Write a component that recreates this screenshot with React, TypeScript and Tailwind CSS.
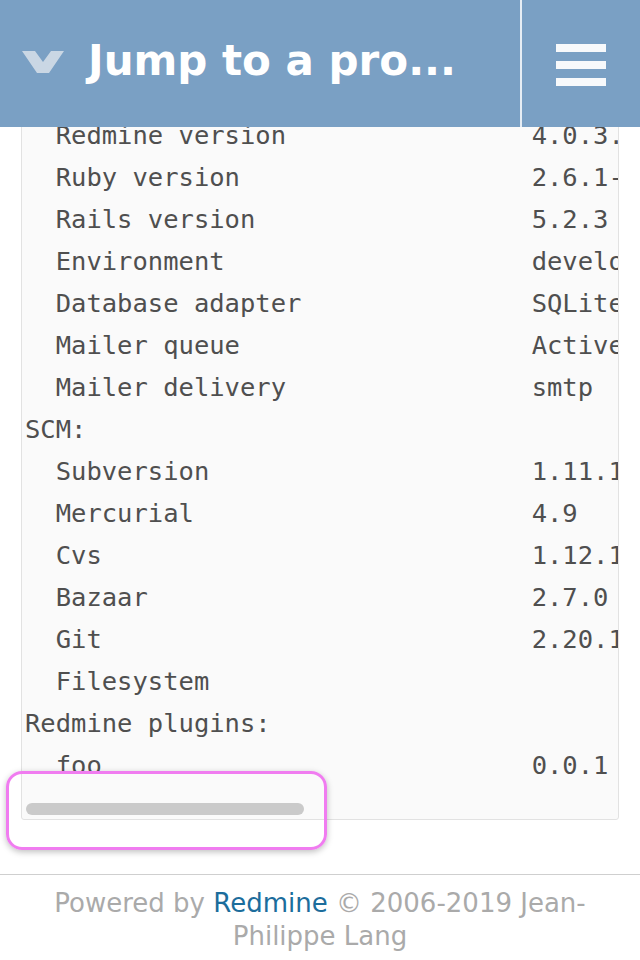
import React from 'react';

type Row = { label: string; value?: string; group?: boolean };

const rows: Row[] = [
  { label: 'Environment:', group: true },
  { label: 'Redmine version', value: '4.0.3.stable' },
  { label: 'Ruby version', value: '2.6.1-p33 (2019-01-30) [x86_64-darwin18]' },
  { label: 'Rails version', value: '5.2.3' },
  { label: 'Environment', value: 'development' },
  { label: 'Database adapter', value: 'SQLite' },
  { label: 'Mailer queue', value: 'ActiveJob::QueueAdapters::AsyncAdapter' },
  { label: 'Mailer delivery', value: 'smtp' },
  { label: 'SCM:', group: true },
  { label: 'Subversion', value: '1.11.1' },
  { label: 'Mercurial', value: '4.9' },
  { label: 'Cvs', value: '1.12.13' },
  { label: 'Bazaar', value: '2.7.0' },
  { label: 'Git', value: '2.20.1' },
  { label: 'Filesystem', value: '' },
  { label: 'Redmine plugins:', group: true },
  { label: 'foo', value: '0.0.1' },
];

const line = (r: Row) => (r.group ? r.label : ('  ' + r.label).padEnd(33, ' ') + (r.value ?? ''));

const App: React.FC = () => {
  return (
    <div className="relative w-[640px] h-[960px] overflow-hidden bg-white font-['DejaVu_Sans',sans-serif]">
      {/* Page content (scrolled) */}
      <main className="pt-[68px] px-[21px]">
        <div className="relative overflow-hidden rounded-[3px] border border-[#e2e2e2] bg-[#fafafa] pl-[3px] pt-[3px] pb-[33px]">
          <div className="font-['DejaVu_Sans_Mono',monospace] text-[25.5px] leading-[42px] text-[#4f4f4f]">
            {rows.map((r) => (
              <div key={r.label} className="whitespace-pre">
                {line(r)}
              </div>
            ))}
          </div>
          {/* overlay scrollbar */}
          <div className="absolute left-[4px] bottom-[4px] h-[12px] w-[278px] rounded-full bg-[#cacaca]"></div>
        </div>
      </main>

      <footer className="mt-[54px] border-t border-[#cfcfcf] px-[10px] pt-[12px] text-center text-[26px] leading-[33px] text-[#aaaaaa]">
        Powered by <a href="#" className="text-[#1c6d9c]">Redmine</a> © 2006-2019 Jean-Philippe Lang
      </footer>

      {/* Fixed mobile header */}
      <header className="absolute top-0 left-0 right-0 h-[127px] flex bg-[#7aa0c4]">
        <div className="flex flex-1 items-center">
          <svg className="ml-[22px] mt-[-4px]" width="42" height="22" viewBox="0 0 42 22">
            <polygon points="0,0 13,0 21,11 29,0 42,0 27,22 15,22" fill="#cad7e4" />
          </svg>
          <span className="ml-[24px] mt-[-6px] text-[42px] font-bold text-white whitespace-nowrap">
            Jump to a pro...
          </span>
        </div>
        <div className="w-[2px] bg-[#e6edf4]"></div>
        <div className="flex w-[118px] flex-col items-center pt-[44px] gap-[9px]">
          <div className="h-[8px] w-[50px] bg-[#f7f9fb]"></div>
          <div className="h-[8px] w-[50px] bg-[#f7f9fb]"></div>
          <div className="h-[8px] w-[50px] bg-[#f7f9fb]"></div>
        </div>
      </header>

      {/* highlight annotation */}
      <div className="absolute left-[6px] top-[771px] h-[79px] w-[321px] rounded-[16px] border-[3px] border-[#f07cf0] shadow-[0_2px_6px_rgba(0,0,0,0.25)]"></div>
    </div>
  );
};

export default App;
